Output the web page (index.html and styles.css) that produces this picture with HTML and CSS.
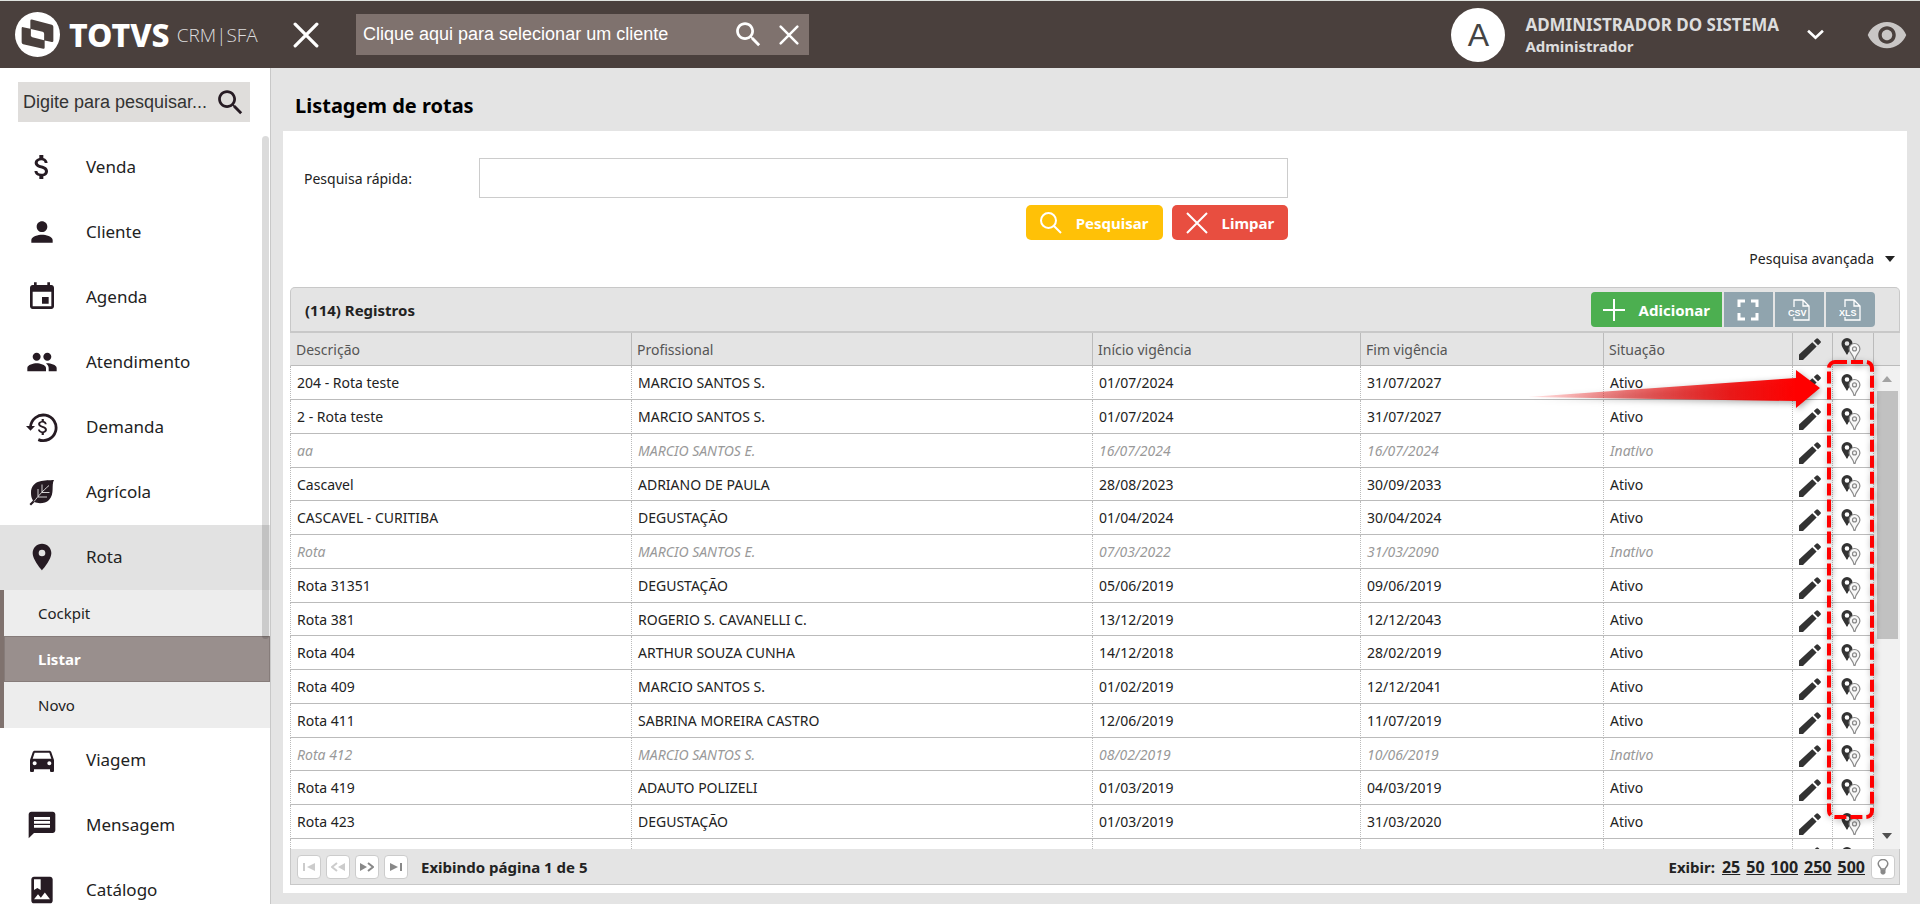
FILE: index.html
```html
<!DOCTYPE html>
<html lang="pt-BR">
<head>
  <meta charset="UTF-8" />
  <meta name="viewport" content="width=device-width, initial-scale=1.0" />
  <title>Listagem de rotas</title>
  <link rel="stylesheet" href="styles.css">
</head>
<body>
  <!-- Shared icons -->
  <svg class="sprite" aria-hidden="true">
    <symbol id="i-search" viewBox="0 0 24 24"><path d="M15.5 14h-.79l-.28-.27C15.41 12.59 16 11.11 16 9.5 16 5.91 13.09 3 9.5 3S3 5.91 3 9.5 5.91 16 9.5 16c1.61 0 3.09-.59 4.23-1.57l.27.28v.79l5 4.99L20.49 19l-4.99-5zm-6 0C7.01 14 5 11.99 5 9.5S7.01 5 9.5 5 14 7.01 14 9.5 11.99 14 9.5 14z"/></symbol>
    <symbol id="i-close" viewBox="0 0 24 24"><path d="M2 2l20 20M22 2L2 22" fill="none" stroke="currentColor" stroke-width="3" stroke-linecap="round"/></symbol>
    <symbol id="i-pencil" viewBox="0 0 22 22"><path d="M0 22v-5.500L13.300 4.200l4.300 4.300L5 21l-1 1zM14.800 3l2.400-2.300q1-1 2 0l2.200 2.200q1 1 0 2L19 7.200z"/></symbol>
    <symbol id="i-pins" viewBox="0 0 20 22">
      <path fill="#333" fill-rule="evenodd" d="M6 0a5.500 5.500 0 0 0-5.500 5.700C.500 9.500 4 12.500 5.500 16.500h1C8 12.500 11.500 9.500 11.500 5.700A5.500 5.500 0 0 0 6 0zm0 3.200a2.300 2.300 0 1 1 0 4.600 2.300 2.300 0 0 1 0-4.600z"/>
      <path fill="#f8f8f8" stroke="#8a8a8a" stroke-width="1.200" d="M13.500 5.500A5.400 5.400 0 0 0 8.100 10.900c0 3.600 4.200 5.800 4.900 10.400h1c.7-4.600 4.900-6.800 4.900-10.400a5.400 5.400 0 0 0-5.400-5.400z"/>
      <circle cx="13.500" cy="10.900" r="2" fill="none" stroke="#8a8a8a" stroke-width="1.200"/>
    </symbol>
  </svg>

  <!-- Top bar -->
  <header class="topbar">
    <a href="#" class="logo" aria-label="TOTVS CRM SFA">
      <svg class="logo-mark" viewBox="0 0 44 44">
        <circle cx="22" cy="22" r="22" fill="#fff"/>
        <path d="M15 8.500q0-1.500 1.500-1.200L36 12.500q1.500.400 1.500 2V28q0 1.500-1.500 1.300l-7-1.500v7q0 1.500-1.500 1.200L8 31.500q-1.500-.400-1.500-2V16q0-1.500 1.500-1.200l7 1.500z" fill="#4a403d"/>
        <path d="M15.500 16.500L27 19.300q1.500.400 1.500 2v6.200L17 24.800q-1.500-.400-1.500-2z" fill="#fff"/>
      </svg>
      <span class="logo-name">TOTVS</span>
      <span class="logo-product">CRM|SFA</span>
    </a>
    <button class="icon-btn menu-close" aria-label="Fechar menu"><svg><use href="#i-close"/></svg></button>
    <div class="client-box">
      <input type="text" class="client-input" placeholder="Clique aqui para selecionar um cliente" aria-label="Cliente">
      <button class="icon-btn client-search" aria-label="Buscar cliente"><svg><use href="#i-search"/></svg></button>
      <button class="icon-btn client-clear" aria-label="Limpar cliente"><svg><use href="#i-close"/></svg></button>
    </div>
    <div class="user">
      <div class="avatar">A</div>
      <div class="user-info">
        <div class="user-name">ADMINISTRADOR DO SISTEMA</div>
        <div class="user-role">Administrador</div>
      </div>
      <button class="icon-btn user-menu" aria-label="Menu do usuário">
        <svg viewBox="0 0 16 10"><path d="M1 1.500l7 6.500 7-6.500" fill="none" stroke="#fff" stroke-width="2.500"/></svg>
      </button>
      <button class="icon-btn eye" aria-label="Visualizar">
        <svg viewBox="0 0 24 24"><path d="M12 4.500C7 4.500 2.730 7.610 1 12c1.730 4.390 6 7.500 11 7.500s9.270-3.110 11-7.500c-1.730-4.390-6-7.500-11-7.500zM12 17c-2.760 0-5-2.240-5-5s2.240-5 5-5 5 2.240 5 5-2.240 5-5 5zm0-8c-1.660 0-3 1.340-3 3s1.340 3 3 3 3-1.340 3-3-1.340-3-3-3z"/></svg>
      </button>
    </div>
  </header>

  <div class="layout">
    <!-- Sidebar -->
    <aside class="sidebar">
      <div class="menu-search">
        <input type="text" class="menu-input" placeholder="Digite para pesquisar..." aria-label="Pesquisar no menu">
        <button class="icon-btn menu-search-btn" aria-label="Pesquisar"><svg><use href="#i-search"/></svg></button>
      </div>
      <nav class="menu">
        <a href="#" class="menu-item">
          <svg viewBox="0 0 24 24"><path d="M11.800 10.900c-2.270-.590-3-1.200-3-2.150 0-1.090 1.010-1.850 2.700-1.850 1.780 0 2.440.850 2.500 2.100h2.210c-.070-1.720-1.120-3.300-3.210-3.810V3h-3v2.160c-1.940.420-3.500 1.680-3.500 3.610 0 2.310 1.910 3.460 4.700 4.130 2.500.600 3 1.480 3 2.410 0 .690-.490 1.790-2.700 1.790-2.060 0-2.870-.920-2.980-2.100h-2.200c.120 2.190 1.760 3.420 3.680 3.830V21h3v-2.150c1.950-.370 3.500-1.500 3.500-3.550 0-2.840-2.430-3.810-4.700-4.400z"/></svg>
          Venda
        </a>
        <a href="#" class="menu-item">
          <svg viewBox="0 0 24 24"><path d="M12 12c2.210 0 4-1.790 4-4s-1.790-4-4-4-4 1.790-4 4 1.790 4 4 4zm0 2c-2.670 0-8 1.340-8 4v2h16v-2c0-2.660-5.330-4-8-4z"/></svg>
          Cliente
        </a>
        <a href="#" class="menu-item">
          <svg viewBox="0 0 24 24"><path d="M17 12h-5v5h5v-5zM16 1v2H8V1H6v2H5c-1.110 0-1.990.900-1.990 2L3 19c0 1.100.890 2 2 2h14c1.100 0 2-.900 2-2V5c0-1.100-.900-2-2-2h-1V1h-2zm3 18H5V8h14v11z"/></svg>
          Agenda
        </a>
        <a href="#" class="menu-item">
          <svg viewBox="0 0 24 24"><path d="M16 11c1.660 0 2.990-1.340 2.990-3S17.660 5 16 5c-1.660 0-3 1.340-3 3s1.340 3 3 3zm-8 0c1.660 0 2.990-1.340 2.990-3S9.660 5 8 5C6.340 5 5 6.340 5 8s1.340 3 3 3zm0 2c-2.330 0-7 1.170-7 3.500V19h14v-2.500c0-2.330-4.670-3.500-7-3.500zm8 0c-.290 0-.620.020-.970.050 1.160.840 1.970 1.970 1.970 3.450V19h6v-2.500c0-2.330-4.670-3.500-7-3.500z"/></svg>
          Atendimento
        </a>
        <a href="#" class="menu-item">
          <svg viewBox="0 0 32 32"><path d="M4.500 16A12.800 12.800 0 1 1 12.300 28.600" fill="none" stroke="#261b23" stroke-width="2.800"/><path d="M0 15h9l-4.500 4.800z"/><path transform="translate(6.400 5.400) scale(.88)" d="M11.800 10.900c-2.270-.590-3-1.200-3-2.150 0-1.090 1.010-1.850 2.700-1.850 1.780 0 2.440.850 2.500 2.100h2.210c-.070-1.720-1.120-3.300-3.210-3.810V3h-2.500v2.160c-2.400.420-4 1.680-4 3.610 0 2.310 1.910 3.460 4.700 4.130 2.500.600 3 1.480 3 2.410 0 .690-.490 1.790-2.700 1.790-2.060 0-2.870-.920-2.980-2.100h-2.200c.120 2.190 1.760 3.420 4.180 3.830V21h2.500v-2.150c1.950-.370 3.500-1.500 3.500-3.550 0-2.840-2.430-3.810-4.700-4.400z"/></svg>
          Demanda
        </a>
        <a href="#" class="menu-item">
          <svg viewBox="0 0 32 32"><path d="M28 4C20 4.500 5 3 5 17c0 3 .500 5 2 7.500L3.500 28l1.500 1.500L8.500 26c4 2 11 1.500 14.500-2C29 18 25 9 28 4z"/><path d="M8 25.500c4-5 8-10 15-16M16 16V8.500M16 16.500h7.500M12 20.500V13M12 21h9" fill="none" stroke="#fff" stroke-width=".8"/></svg>
          Agrícola
        </a>
        <a href="#" class="menu-item open">
          <svg viewBox="0 0 24 24"><path d="M12 2C8.130 2 5 5.130 5 9c0 5.250 7 13 7 13s7-7.750 7-13c0-3.870-3.130-7-7-7zm0 9.500a2.500 2.500 0 1 1 0-5 2.500 2.500 0 0 1 0 5z"/></svg>
          Rota
        </a>
        <div class="submenu">
          <a href="#" class="submenu-item">Cockpit</a>
          <a href="#" class="submenu-item active">Listar</a>
          <a href="#" class="submenu-item">Novo</a>
        </div>
        <a href="#" class="menu-item">
          <svg viewBox="0 0 24 24"><path d="M18.920 6.010C18.720 5.420 18.160 5 17.500 5h-11c-.660 0-1.210.420-1.420 1.010L3 12v8c0 .550.450 1 1 1h1c.550 0 1-.450 1-1v-1h12v1c0 .550.450 1 1 1h1c.550 0 1-.450 1-1v-8l-2.080-5.990zM6.500 16c-.830 0-1.500-.670-1.500-1.500S5.670 13 6.500 13s1.500.670 1.500 1.500S7.330 16 6.500 16zm11 0c-.830 0-1.500-.670-1.500-1.500s.670-1.500 1.500-1.500 1.500.670 1.500 1.500-.670 1.500-1.500 1.500zM5 11l1.500-4.500h11L19 11H5z"/></svg>
          Viagem
        </a>
        <a href="#" class="menu-item">
          <svg viewBox="0 0 24 24"><path d="M20 2H4c-1.100 0-1.990.900-1.990 2L2 22l4-4h14c1.100 0 2-.900 2-2V4c0-1.100-.900-2-2-2zm-2 12H6v-2h12v2zm0-3H6V9h12v2zm0-3H6V6h12v2z"/></svg>
          Mensagem
        </a>
        <a href="#" class="menu-item">
          <svg viewBox="0 0 24 24"><path d="M18 2H6c-1.100 0-2 .900-2 2v16c0 1.100.900 2 2 2h12c1.100 0 2-.900 2-2V4c0-1.100-.900-2-2-2zM6 4h5v8l-2.500-1.500L6 12V4zm0 15l3-3.860 2.140 2.580 3-3.860L18 19H6z"/></svg>
          Catálogo
        </a>
        <div class="menu-thumb"></div>
      </nav>
    </aside>

    <!-- Content -->
    <main class="content">
      <h1 class="page-title">Listagem de rotas</h1>
      <section class="panel">
        <form class="search-form">
          <label for="quick-search">Pesquisa rápida:</label>
          <input type="text" id="quick-search" class="quick-input">
          <div class="form-actions">
            <button type="button" class="btn btn-search">
              <svg viewBox="0 0 22 22"><path d="M14 14l7 7M8.500 1a7.500 7.500 0 1 0 0 15 7.500 7.500 0 0 0 0-15z" fill="none" stroke="#fff" stroke-width="2"/></svg>
              Pesquisar
            </button>
            <button type="button" class="btn btn-clear">
              <svg viewBox="0 0 22 22"><path d="M1 1l20 20M21 1L1 21" fill="none" stroke="#fff" stroke-width="2"/></svg>
              Limpar
            </button>
          </div>
        </form>
        <a href="#" class="advanced">Pesquisa avançada <span class="caret"></span></a>

        <div class="grid">
          <div class="grid-toolbar">
            <strong class="grid-count">(114) Registros</strong>
            <div class="grid-actions">
              <button class="btn btn-add">
                <svg viewBox="0 0 22 22"><path d="M11 0v22M0 11h22" fill="none" stroke="#fff" stroke-width="2"/></svg>
                Adicionar
              </button>
              <button class="btn btn-tool" aria-label="Tela cheia">
                <svg viewBox="0 0 22 22"><path d="M2 8V2h6M14 2h6v6M20 14v6h-6M8 20H2v-6" fill="none" stroke="#fff" stroke-width="3"/></svg>
              </button>
              <button class="btn btn-tool" aria-label="Exportar CSV">
                <svg viewBox="0 0 22 22"><path d="M6 8V1h9l6 6v14H6v-3M15 1v6h6" fill="none" stroke="#fff" stroke-width="1.300"/><text class="file-label" x="0" y="17">CSV</text></svg>
              </button>
              <button class="btn btn-tool last" aria-label="Exportar XLS">
                <svg viewBox="0 0 22 22"><path d="M6 8V1h9l6 6v14H6v-3M15 1v6h6" fill="none" stroke="#fff" stroke-width="1.300"/><text class="file-label" x="0" y="17">XLS</text></svg>
              </button>
            </div>
          </div>

          <div class="grid-body">
            <table class="routes">
              <colgroup>
                <col class="c-desc"><col class="c-prof"><col class="c-start"><col class="c-end"><col class="c-status"><col class="c-edit"><col class="c-map">
              </colgroup>
              <thead>
                <tr><th>Descrição</th><th>Profissional</th><th>Início vigência</th><th>Fim vigência</th><th>Situação</th><th class="ico"><svg class="pencil"><use href="#i-pencil"/></svg></th><th class="ico"><svg class="pins"><use href="#i-pins"/></svg></th></tr>
              </thead>
              <tbody>
                <tr><td>204 - Rota teste</td><td>MARCIO SANTOS S.</td><td>01/07/2024</td><td>31/07/2027</td><td>Ativo</td><td class="ico"><button aria-label="Editar"><svg class="pencil"><use href="#i-pencil"/></svg></button></td><td class="ico"><button aria-label="Mapa"><svg class="pins"><use href="#i-pins"/></svg></button></td></tr>
                <tr><td>2 - Rota teste</td><td>MARCIO SANTOS S.</td><td>01/07/2024</td><td>31/07/2027</td><td>Ativo</td><td class="ico"><button aria-label="Editar"><svg class="pencil"><use href="#i-pencil"/></svg></button></td><td class="ico"><button aria-label="Mapa"><svg class="pins"><use href="#i-pins"/></svg></button></td></tr>
                <tr class="inactive"><td>aa</td><td>MARCIO SANTOS E.</td><td>16/07/2024</td><td>16/07/2024</td><td>Inativo</td><td class="ico"><button aria-label="Editar"><svg class="pencil"><use href="#i-pencil"/></svg></button></td><td class="ico"><button aria-label="Mapa"><svg class="pins"><use href="#i-pins"/></svg></button></td></tr>
                <tr><td>Cascavel</td><td>ADRIANO DE PAULA</td><td>28/08/2023</td><td>30/09/2033</td><td>Ativo</td><td class="ico"><button aria-label="Editar"><svg class="pencil"><use href="#i-pencil"/></svg></button></td><td class="ico"><button aria-label="Mapa"><svg class="pins"><use href="#i-pins"/></svg></button></td></tr>
                <tr><td>CASCAVEL - CURITIBA</td><td>DEGUSTAÇÃO</td><td>01/04/2024</td><td>30/04/2024</td><td>Ativo</td><td class="ico"><button aria-label="Editar"><svg class="pencil"><use href="#i-pencil"/></svg></button></td><td class="ico"><button aria-label="Mapa"><svg class="pins"><use href="#i-pins"/></svg></button></td></tr>
                <tr class="inactive"><td>Rota</td><td>MARCIO SANTOS E.</td><td>07/03/2022</td><td>31/03/2090</td><td>Inativo</td><td class="ico"><button aria-label="Editar"><svg class="pencil"><use href="#i-pencil"/></svg></button></td><td class="ico"><button aria-label="Mapa"><svg class="pins"><use href="#i-pins"/></svg></button></td></tr>
                <tr><td>Rota 31351</td><td>DEGUSTAÇÃO</td><td>05/06/2019</td><td>09/06/2019</td><td>Ativo</td><td class="ico"><button aria-label="Editar"><svg class="pencil"><use href="#i-pencil"/></svg></button></td><td class="ico"><button aria-label="Mapa"><svg class="pins"><use href="#i-pins"/></svg></button></td></tr>
                <tr><td>Rota 381</td><td>ROGERIO S. CAVANELLI C.</td><td>13/12/2019</td><td>12/12/2043</td><td>Ativo</td><td class="ico"><button aria-label="Editar"><svg class="pencil"><use href="#i-pencil"/></svg></button></td><td class="ico"><button aria-label="Mapa"><svg class="pins"><use href="#i-pins"/></svg></button></td></tr>
                <tr><td>Rota 404</td><td>ARTHUR SOUZA CUNHA</td><td>14/12/2018</td><td>28/02/2019</td><td>Ativo</td><td class="ico"><button aria-label="Editar"><svg class="pencil"><use href="#i-pencil"/></svg></button></td><td class="ico"><button aria-label="Mapa"><svg class="pins"><use href="#i-pins"/></svg></button></td></tr>
                <tr><td>Rota 409</td><td>MARCIO SANTOS S.</td><td>01/02/2019</td><td>12/12/2041</td><td>Ativo</td><td class="ico"><button aria-label="Editar"><svg class="pencil"><use href="#i-pencil"/></svg></button></td><td class="ico"><button aria-label="Mapa"><svg class="pins"><use href="#i-pins"/></svg></button></td></tr>
                <tr><td>Rota 411</td><td>SABRINA MOREIRA CASTRO</td><td>12/06/2019</td><td>11/07/2019</td><td>Ativo</td><td class="ico"><button aria-label="Editar"><svg class="pencil"><use href="#i-pencil"/></svg></button></td><td class="ico"><button aria-label="Mapa"><svg class="pins"><use href="#i-pins"/></svg></button></td></tr>
                <tr class="inactive"><td>Rota 412</td><td>MARCIO SANTOS S.</td><td>08/02/2019</td><td>10/06/2019</td><td>Inativo</td><td class="ico"><button aria-label="Editar"><svg class="pencil"><use href="#i-pencil"/></svg></button></td><td class="ico"><button aria-label="Mapa"><svg class="pins"><use href="#i-pins"/></svg></button></td></tr>
                <tr><td>Rota 419</td><td>ADAUTO POLIZELI</td><td>01/03/2019</td><td>04/03/2019</td><td>Ativo</td><td class="ico"><button aria-label="Editar"><svg class="pencil"><use href="#i-pencil"/></svg></button></td><td class="ico"><button aria-label="Mapa"><svg class="pins"><use href="#i-pins"/></svg></button></td></tr>
                <tr><td>Rota 423</td><td>DEGUSTAÇÃO</td><td>01/03/2019</td><td>31/03/2020</td><td>Ativo</td><td class="ico"><button aria-label="Editar"><svg class="pencil"><use href="#i-pencil"/></svg></button></td><td class="ico"><button aria-label="Mapa"><svg class="pins"><use href="#i-pins"/></svg></button></td></tr>
                <tr><td></td><td></td><td></td><td></td><td></td><td class="ico"><button aria-label="Editar"><svg class="pencil"><use href="#i-pencil"/></svg></button></td><td class="ico"><button aria-label="Mapa"><svg class="pins"><use href="#i-pins"/></svg></button></td></tr>
              </tbody>
            </table>
            <div class="scroll">
              <div class="scroll-head"></div>
              <div class="scroll-track">
                <span class="scroll-up"></span>
                <span class="scroll-thumb"></span>
                <span class="scroll-down"></span>
              </div>
            </div>
            <!-- Highlight over the map column -->
            <svg class="highlight" viewBox="0 0 360 480" aria-hidden="true">
              <defs>
                <linearGradient id="fade" gradientUnits="userSpaceOnUse" x1="10" y1="0" x2="276" y2="0">
                  <stop offset="0" stop-color="#f00" stop-opacity=".1"/>
                  <stop offset=".35" stop-color="#e31010" stop-opacity=".55"/>
                  <stop offset=".75" stop-color="#ee0808" stop-opacity=".9"/>
                  <stop offset="1" stop-color="#f00"/>
                </linearGradient>
              </defs>
              <path d="M8 47L276 28v-8l24 18-24 20v-7z" fill="url(#fade)"/>
              <rect x="309" y="12" width="43" height="455" rx="6" fill="none" stroke="#f00" stroke-width="4" stroke-dasharray="12 4"/>
            </svg>
          </div>

          <div class="grid-footer">
            <div class="pager">
              <button class="page-btn" disabled aria-label="Primeira"><svg viewBox="0 0 14 10"><path d="M1 1h2v8H1zM13 1v8L5 5z"/></svg></button>
              <button class="page-btn" disabled aria-label="Anterior"><svg viewBox="0 0 14 10"><path d="M14 1v8L7 5z"/><path d="M6 1L1 5l5 4" fill="none" stroke="currentColor" stroke-width="2"/></svg></button>
              <button class="page-btn" aria-label="Próxima"><svg viewBox="0 0 14 10"><path d="M0 1v8l7-4z"/><path d="M8 1l5 4-5 4" fill="none" stroke="currentColor" stroke-width="2"/></svg></button>
              <button class="page-btn" aria-label="Última"><svg viewBox="0 0 14 10"><path d="M1 1v8l8-4zM11 1h2v8h-2z"/></svg></button>
            </div>
            <strong class="page-info">Exibindo página 1 de 5</strong>
            <div class="page-size">
              <span class="page-size-label">Exibir:</span>
              <a href="#">25</a>
              <a href="#">50</a>
              <a href="#">100</a>
              <a href="#">250</a>
              <a href="#">500</a>
              <button class="page-btn" aria-label="Dica"><svg class="bulb" viewBox="0 0 12 16"><path d="M4 10C4 8.500 1.200 7.500 1.200 4.800a4.800 4.300 0 0 1 9.600 0C10.800 7.500 8 8.500 8 10z" fill="none" stroke="currentColor" stroke-width="1.500"/><path d="M3.500 10.500h5V14l-1.500 1.500H5L3.500 14z"/></svg></button>
            </div>
          </div>
        </div>
      </section>
    </main>
  </div>
</body>
</html>
```
FILE: styles.css
```css
* {
  margin: 0;
  padding: 0;
  box-sizing: border-box;
}
body {
  display: flex;
  flex-direction: column;
  height: 100vh;
  overflow: hidden;
  background: #e4e4e4;
  color: #222;
  font-family: "Noto Sans", "Open Sans", sans-serif;
  font-size: 14px;
}
a {
  color: inherit;
  text-decoration: none;
}
button,
input {
  font: inherit;
  border: none;
  background: none;
}
button {
  cursor: pointer;
}
svg {
  display: block;
  fill: currentColor;
}
.sprite {
  position: absolute;
  width: 0;
  height: 0;
}

/* Top bar */
.topbar {
  flex: none;
  display: flex;
  align-items: center;
  height: 68px;
  padding: 0 12px 0 15px;
  border-top: 1px solid #dfe3df;
  background: #4a403d;
  color: #fff;
}
.logo {
  display: flex;
  align-items: center;
  width: 278px;
}
.logo-mark {
  width: 45px;
  height: 45px;
  margin-right: 9px;
}
.logo-name {
  font-size: 32px;
  line-height: 40px;
  font-weight: 800;
  margin-right: 7px;
}
.logo-product {
  font-family: "Open Sans", sans-serif;
  font-size: 19px;
  font-weight: 300;
  color: #ddd;
}
.icon-btn {
  display: flex;
  align-items: center;
  justify-content: center;
  color: inherit;
}
.menu-close svg {
  width: 26px;
  height: 26px;
}
.client-box {
  display: flex;
  align-items: center;
  width: 453px;
  height: 41px;
  margin-left: 37px;
  padding: 0 10px 0 7px;
  background: #7f726e;
}
.client-input {
  flex: 1;
  min-width: 0;
  font-family: "Liberation Sans", Arial, sans-serif;
  font-size: 18px;
  color: #fff;
}
.client-input::placeholder {
  color: #fff;
}
.client-search svg {
  width: 33px;
  height: 33px;
}
.client-clear {
  margin-left: 14px;
}
.client-clear svg {
  width: 20px;
  height: 20px;
}
.user {
  display: flex;
  align-items: center;
  margin-left: auto;
}
.avatar {
  width: 54px;
  height: 54px;
  border-radius: 50%;
  background: #fff;
  color: #444;
  font-family: "Liberation Sans", Arial, sans-serif;
  font-size: 32px;
  line-height: 54px;
  text-align: center;
}
.user-info {
  margin-left: 20px;
  color: #ddd;
  font-weight: bold;
}
.user-name {
  font-size: 17px;
  line-height: 22px;
}
.user-role {
  font-size: 15px;
  line-height: 20px;
}
.user-menu {
  margin-left: 28px;
}
.user-menu svg {
  width: 17px;
  height: 11px;
}
.eye {
  margin-left: 42px;
  color: #c9c6c5;
}
.eye svg {
  width: 42px;
  height: 42px;
}

/* Sidebar */
.layout {
  flex: 1;
  display: flex;
  min-height: 0;
}
.sidebar {
  flex: none;
  width: 271px;
  border-right: 1px solid #c8c8c8;
  background: #fff;
  overflow: hidden;
}
.menu-search {
  display: flex;
  align-items: center;
  height: 40px;
  margin: 14px 20px 13px 18px;
  padding: 0 3px 0 5px;
  background: #dfdddb;
}
.menu-input {
  flex: 1;
  min-width: 0;
  font-family: "Liberation Sans", Arial, sans-serif;
  font-size: 18px;
  color: #333;
}
.menu-input::placeholder {
  color: #333;
}
.menu-search-btn {
  color: #261b23;
}
.menu-search-btn svg {
  width: 33px;
  height: 33px;
}
.menu {
  position: relative;
}
.menu-item {
  display: flex;
  align-items: center;
  gap: 28px;
  height: 65px;
  padding: 0 26px 2px;
  font-size: 17px;
}
.menu-item svg {
  width: 32px;
  height: 32px;
  color: #261b23;
}
.menu-item.open {
  background: #e2e2e2;
}
.submenu {
  border-left: 4px solid #7f726e;
}
.submenu-item {
  display: block;
  height: 46px;
  padding-left: 34px;
  background: #ededed;
  font-size: 15px;
  line-height: 46px;
}
.submenu-item.active {
  background: #998f8d;
  box-shadow: inset 0 0 0 1px #867c7a;
  color: #fff;
  font-weight: bold;
}
.menu-thumb {
  position: absolute;
  top: 1px;
  right: 1px;
  width: 7px;
  height: 503px;
  border-radius: 4px;
  background: rgba(0, 0, 0, 0.14);
}

/* Content */
.content {
  flex: 1;
  display: flex;
  flex-direction: column;
  min-width: 0;
  padding: 0 13px 11px 12px;
}
.page-title {
  padding: 26px 12px 13px;
  color: #000;
  font-size: 20px;
  line-height: 24px;
}
.panel {
  flex: 1;
  display: flex;
  flex-direction: column;
  min-height: 0;
  background: #fff;
}
.search-form {
  display: grid;
  grid-template-columns: 175px 17fr 13fr;
  align-items: center;
  row-gap: 7px;
  padding: 27px 0 0 21px;
}
.quick-input {
  height: 40px;
  padding: 0 8px;
  border: 1px solid #ccc;
}
.form-actions {
  grid-column: 2;
  display: flex;
  justify-content: flex-end;
  gap: 9px;
}
.btn {
  display: flex;
  align-items: center;
  gap: 14px;
  height: 35px;
  padding: 0 14px;
  color: #fff;
  font-size: 15px;
  font-weight: bold;
}
.btn svg {
  width: 22px;
  height: 22px;
}
.btn-search {
  border-radius: 5px;
  background: #ffc107;
}
.btn-clear {
  border-radius: 5px;
  background: #e84e40;
}
.advanced {
  display: flex;
  align-items: center;
  gap: 11px;
  align-self: flex-end;
  margin: 9px 12px 18px 0;
  line-height: 20px;
}
.caret {
  border: 5px solid transparent;
  border-top: 6px solid #222;
  border-bottom: none;
}

/* Grid */
.grid {
  flex: 1;
  display: flex;
  flex-direction: column;
  min-height: 0;
  margin: 0 7px 8px;
}
.grid-toolbar {
  display: flex;
  align-items: center;
  justify-content: space-between;
  height: 46px;
  padding: 0 24px 0 14px;
  border: 1px solid #c8c8c8;
  border-bottom-width: 2px;
  border-radius: 5px 5px 0 0;
  background: #e4e4e4;
}
.grid-count {
  font-size: 15px;
}
.grid-actions {
  display: flex;
  gap: 2px;
}
.btn-add {
  padding: 0 12px;
  border-radius: 4px 0 0 4px;
  background: #4caf50;
}
.btn-tool {
  width: 49px;
  padding: 0 13px;
  background: #90a4ae;
}
.btn-tool.last {
  border-radius: 0 4px 4px 0;
}
.file-label {
  font-family: "Liberation Sans", Arial, sans-serif;
  font-size: 9px;
  fill: #fff;
}
.grid-body {
  position: relative;
  flex: 1;
  display: flex;
  align-items: flex-start;
  min-height: 0;
  overflow: hidden;
}
.routes {
  flex: 1;
  table-layout: fixed;
  border-spacing: 0;
}
.c-desc {
  width: 341px;
}
.c-start {
  width: 268px;
}
.c-end {
  width: 243px;
}
.c-status {
  width: 189px;
}
.c-edit {
  width: 40px;
}
.c-map {
  width: 42px;
}
.routes th {
  height: 33px;
  padding: 0 5px;
  border-left: 1px solid #bbb;
  border-bottom: 1px solid #bbb;
  background: #e4e4e4;
  color: #555;
  font-weight: normal;
  text-align: left;
}
.routes th:first-child {
  border-left-color: #e4e4e4;
}
.routes td {
  height: 34px;
  padding: 0 6px;
  border-left: 1px dotted #bbb;
  border-bottom: 1px solid #bbb;
  white-space: nowrap;
}
.routes tr:nth-child(4n) td {
  height: 33px;
}
.routes th:last-child {
  border-right: 1px solid #bbb;
}
.routes td:last-child {
  border-right: 1px dotted #bbb;
}
.routes .inactive td {
  color: #999;
  font-style: italic;
}
.routes .ico {
  padding: 0 0 0 6px;
}
.routes td.ico {
  padding-top: 4px;
}
.routes .ico button {
  display: block;
}
.routes .ico svg {
  color: #333;
}
.pencil {
  width: 22px;
  height: 22px;
}
.pins {
  width: 24px;
  height: 22px;
}
.scroll {
  flex: none;
  align-self: stretch;
  display: flex;
  flex-direction: column;
  width: 26px;
}
.scroll-head {
  height: 33px;
  border-bottom: 1px solid #bbb;
  background: #e4e4e4;
}
.scroll-track {
  flex: 1;
  display: flex;
  flex-direction: column;
  align-items: center;
  padding: 10px 0;
  background: #f1f1f1;
}
.scroll-up,
.scroll-down {
  border: 5px solid transparent;
}
.scroll-up {
  border-top: none;
  border-bottom: 6px solid #a3a3a3;
}
.scroll-thumb {
  width: 21px;
  height: 248px;
  margin-top: 9px;
  background: #c1c1c1;
}
.scroll-down {
  margin-top: auto;
  border-bottom: none;
  border-top: 6px solid #505050;
}
.highlight {
  position: absolute;
  top: 17px;
  right: 20px;
  width: 360px;
  height: 480px;
  pointer-events: none;
  filter: drop-shadow(1px 2px 3px rgba(0, 0, 0, 0.35));
}

/* Footer */
.grid-footer {
  display: flex;
  align-items: center;
  height: 36px;
  padding: 0 4px 0 6px;
  border: 1px solid #c8c8c8;
  border-top: none;
  background: #e4e4e4;
  color: #222;
  font-size: 15px;
}
.pager {
  display: flex;
  gap: 5px;
}
.page-btn {
  display: flex;
  align-items: center;
  justify-content: center;
  width: 24px;
  height: 24px;
  border: 1px solid #ccc;
  border-radius: 4px;
  background: #fff;
  color: #888;
}
.page-btn:disabled {
  color: #ccc;
}
.page-btn svg {
  width: 14px;
  height: 10px;
}
.page-btn .bulb {
  width: 12px;
  height: 16px;
}
.page-info {
  margin-left: 13px;
}
.page-size {
  display: flex;
  align-items: center;
  gap: 6px;
  margin-left: auto;
  font-size: 16px;
  font-weight: bold;
}
.page-size-label {
  margin-right: 1px;
  font-size: 15px;
}
.page-size a {
  text-decoration: underline;
}
```
